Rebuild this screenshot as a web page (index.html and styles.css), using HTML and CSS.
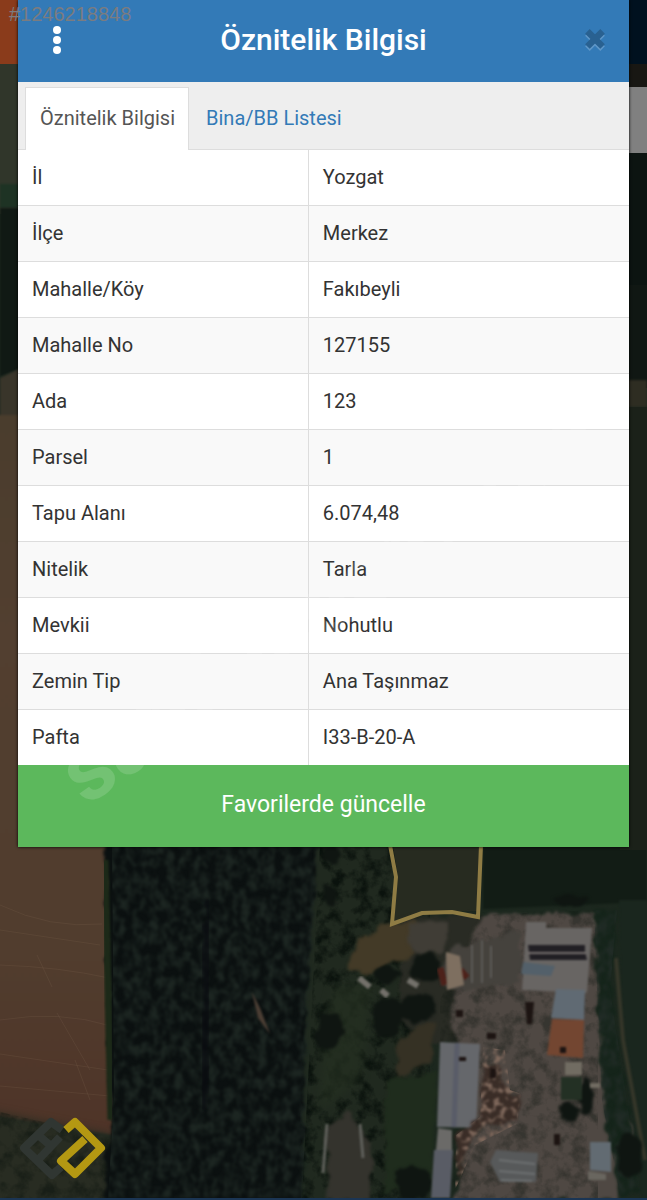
FILE: index.html
```html
<!DOCTYPE html>
<html lang="tr">
<head>
<meta charset="utf-8">
<meta name="viewport" content="width=device-width, initial-scale=1">
<title>Öznitelik Bilgisi</title>
<link rel="stylesheet" href="styles.css">
</head>
<body class="page">
<svg class="map" viewBox="0 0 647 1200" preserveAspectRatio="xMidYMin slice" aria-hidden="true">
  <defs>
    <filter id="soft"><feGaussianBlur stdDeviation="1"/></filter>
    <filter id="blur" x="-20%" y="-20%" width="140%" height="140%"><feGaussianBlur stdDeviation="5"/></filter>
    <filter id="trees" x="0" y="0" width="100%" height="100%">
      <feTurbulence type="fractalNoise" baseFrequency=".12 .09" numOctaves="3" seed="6"/>
      <feColorMatrix values="0 0 0 0 .13  0 0 0 0 .17  0 0 0 0 .15  2.6 0 0 0 -.95"/>
      <feGaussianBlur stdDeviation=".8"/>
      <feComposite in2="SourceGraphic" operator="in"/>
    </filter>
    <filter id="rough" x="-10%" y="-10%" width="120%" height="120%">
      <feTurbulence type="fractalNoise" baseFrequency=".06" numOctaves="3" seed="3" result="n"/>
      <feDisplacementMap in="SourceGraphic" in2="n" scale="14" xChannelSelector="R" yChannelSelector="G"/>
      <feGaussianBlur stdDeviation="1.4"/>
    </filter>
    <filter id="grain" x="0" y="0" width="100%" height="100%">
      <feTurbulence type="fractalNoise" baseFrequency=".07" numOctaves="4" seed="12"/>
      <feColorMatrix values="0 0 0 0 .04  0 0 0 0 .07  0 0 0 0 .05  0 3 0 0 -1.3"/>
      <feComposite in2="SourceGraphic" operator="in"/>
    </filter>
    <filter id="debris" x="0" y="0" width="100%" height="100%">
      <feTurbulence type="fractalNoise" baseFrequency=".16" numOctaves="3" seed="8"/>
      <feColorMatrix values="0 0 0 0 .5  0 0 0 0 .41  0 0 0 0 .36  5 0 0 0 -2.5"/>
      <feGaussianBlur stdDeviation=".8"/>
      <feComposite in2="SourceGraphic" operator="in"/>
    </filter>
    <linearGradient id="soil" x1="0" y1="0" x2="0" y2="1">
      <stop offset="0" stop-color="#4a3d2d"/><stop offset=".3" stop-color="#523f30"/><stop offset=".75" stop-color="#513d2e"/><stop offset="1" stop-color="#4f3428"/>
    </linearGradient>
  </defs>
  <rect width="647" height="1200" fill="#1c271e"/>
  <rect width="30" height="150" y="64" fill="#30362a"/>
  <path d="M0 184H30V208H0z" fill="#1e3324" filter="url(#soft)"/>
  <path d="M0 208H30V365L0 376z" fill="#101914" filter="url(#soft)"/>
  <path d="M0 378L30 364V430H0z" fill="#39352a" filter="url(#soft)"/>
  <path d="M-10 415H102L112 1135L-10 1115z" fill="url(#soil)" filter="url(#soft)"/>
  <g fill="none" stroke="#78604a" stroke-opacity=".25">
    <path d="M0 905Q50 929 102 924M0 965Q60 967 109 978M0 1020Q60 1010 111 1026M0 1054L108 1070M37 955L52 987M57 1013L90 1070M75 1060L90 1100M0 930L100 945M0 1086L110 1096"/>
  </g>
  <path d="M-20 1110L112 1135V1220H-20z" fill="#282c22" filter="url(#blur)"/>
  <path d="M0 1112L112 1138V1200H0z" filter="url(#grain)" opacity=".5"/>
  <path d="M105 835H322L308 985L300 1210H104L112 1110z" fill="#0b1010" filter="url(#rough)"/>
  <path d="M112 840H320L302 1198H108L114 1100z" filter="url(#trees)" opacity=".8"/>
  <path d="M105 860L111 1120" stroke="#1c2918" stroke-width="7" filter="url(#soft)"/>
  <path d="M208 900L203 1110" stroke="#090b10" stroke-width="8" opacity=".7" filter="url(#rough)"/>
  <path d="M252 992L260 1008L270 1034L258 1018z" fill="#4b3e34" filter="url(#soft)"/>
  <path d="M318 840H430V1200H302L309 990z" fill="#20291f" filter="url(#rough)"/>
  <path d="M320 845H430V1198H302z" filter="url(#grain)"/>
  <path d="M335 985H372L360 1080L320 1110L325 1020z" fill="#253021" opacity=".7" filter="url(#blur)"/>
  <path d="M385 1075H437L432 1190H385z" fill="#1f2c1d" filter="url(#rough)"/>
  <path d="M329 1120L350 1112L371 1145V1200H326z" fill="#34332d" filter="url(#rough)"/>
  <path d="M327 1124L323 1173M360 1124L363 1158" stroke="#5f605b" stroke-width="3" filter="url(#soft)"/>
  <path d="M393 846H479V911L422 912L394 922L398 877z" fill="#272b20"/>
  <path d="M483 840H647V902L483 909z" fill="#121c15" filter="url(#soft)"/>
  <path d="M400 918L482 914L475 1045H435L400 1020z" fill="#292b24" filter="url(#rough)"/>
  <path d="M345 970Q360 925 393 925L418 919L412 955L370 972z" fill="#433a27" filter="url(#rough)"/>
  <path d="M408 923L450 920L443 950L412 955z" fill="#403d36" filter="url(#rough)"/>
  <path d="M393 1050Q406 1023 435 1027L432 1060L398 1075z" fill="#353124" filter="url(#rough)"/>
  <path d="M485 914L600 914L600 1010L610 1100L636 1130L618 1200H455L470 1100L450 1010L463 950z" fill="#4f4843" filter="url(#rough)"/>
  <path d="M480 915L598 910V1198H440V1000z" filter="url(#grain)" opacity=".35"/>
  <path d="M594 910H617L610 990L641 1195H620L602 1100z" fill="#15241a" filter="url(#rough)"/>
  <path d="M594 910H617L610 990L641 1195H620L602 1100z" filter="url(#trees)"/>
  <path d="M619 900H647V1198H642L622 1040z" fill="#1a261e" filter="url(#soft)"/>
  <path d="M616 958L623 1040L645 1160" stroke="#353629" stroke-width="4" fill="none" filter="url(#soft)"/>
  <g fill="#0f1511" filter="url(#rough)">
    <ellipse cx="418" cy="1007" rx="18" ry="16"/><ellipse cx="388" cy="1018" rx="16" ry="20"/><ellipse cx="425" cy="967" rx="15" ry="14"/><ellipse cx="386" cy="975" rx="14" ry="9"/>
    <ellipse cx="329" cy="1030" rx="13" ry="18"/><ellipse cx="569" cy="1111" rx="11" ry="10"/><ellipse cx="586" cy="1098" rx="7" ry="17"/><ellipse cx="413" cy="1183" rx="18" ry="16"/><ellipse cx="630" cy="1154" rx="14" ry="20"/><ellipse cx="330" cy="897" rx="7" ry="9"/><ellipse cx="333" cy="855" rx="7" ry="9"/><ellipse cx="570" cy="900" rx="18" ry="5"/>
  </g>
  <path d="M445 952L466 947L520 930V982L462 992L440 985z" fill="#45423d" filter="url(#rough)"/>
  <path d="M440 968L445 985M460 970L467 978" stroke="#4d211a" stroke-width="7" filter="url(#soft)"/>
  <path d="M446 952L460 956L464 985L447 990z" fill="#7e6f60" filter="url(#soft)"/>
  <path d="M472 945V983M482 940V983M491 946V978" stroke="#5c5b58" stroke-width="2" filter="url(#soft)"/>
  <path d="M359 978L370 987M381 990L388 996M408 980L418 986" stroke="#74716b" stroke-width="6" filter="url(#soft)"/>
  <g filter="url(#soft)">
    <path d="M526 922H546V928H592L587 993L522 990z" fill="#686563"/>
    <path d="M523 962L555 966L551 976L521 974z" fill="#53606a"/>
    <path d="M528 945H585V951L587 960H530z" fill="#211f24"/>
    <path d="M528 953H586" stroke="#77716f" stroke-width="2"/>
    <path d="M556 989L585 990L584 1020L551 1018z" fill="#606a73"/>
    <path d="M552 1019L584 1020L583 1058L547 1055z" fill="#734631"/>
    <path d="M440 1042L480 1044L476 1128L437 1127z" fill="#65676b"/>
    <path d="M457 1043L454 1127" stroke="#595c68" stroke-width="5"/>
    <path d="M438 1128L452 1130V1150H436z" fill="#6b6a68"/>
    <path d="M434 1150H453L450 1198H431z" fill="#595c65"/>
    <path d="M496 1150L538 1153L536 1182H500L490 1162z" fill="#57595a"/>
    <path d="M499 1160L535 1164M499 1171L535 1174M501 1180L532 1181" stroke="#6d7071" stroke-width="2"/>
    <path d="M590 1142H611V1172L590 1170z" fill="#626b72"/>
    <path d="M588 1171L606 1174V1180H588z" fill="#69665f"/>
    <path d="M565 1062H582V1075H565zM590 1083H600V1088H590z" fill="#716c62"/>
    <path d="M561 1077H582V1100H561z" fill="#233024"/>
  </g>
  <path d="M483 1065L499 1065L505 1090L521 1094L517 1119L475 1130L455 1180L456 1135L480 1117z" fill="#3a2d27" filter="url(#rough)"/>
  <path d="M483 1047L505 1050L510 1090L521 1094L517 1124L475 1145L455 1190L456 1135L480 1117z" filter="url(#debris)"/>
  <g fill="#1c1412" filter="url(#soft)"><path d="M525 1002H534L532 1024H527zM487 1033H496V1039H487zM459 1057H466V1061H459zM554 1134H560V1145H554zM560 1047H566V1053H560zM490 1068H496V1078H490zM456 1010H463V1017H456z"/></g>
  <path d="M390 845L396 877L392 924L422 913L452 912L478 917L481 845" fill="none" stroke="#8f7c44" stroke-width="4"/>
  <rect width="40" height="64" fill="#8a3b1b"/>
  <rect x="620" width="27" height="64" fill="#00111f"/>
  <rect x="620" y="64" width="27" height="23" fill="#181713"/>
  <rect x="620" y="87" width="27" height="66" fill="#808080"/>
  <rect x="620" y="153" width="27" height="235" fill="#0c1411"/>
  <path d="M620 285H647V380H620z" fill="#101713"/><path d="M620 380H647V407H620z" fill="#2e2d22" filter="url(#soft)"/>
  <path d="M620 407H647V850H620z" fill="#1b2119"/>
  <rect y="1198" width="647" height="2" fill="#1b3554"/>
  <g fill="none" stroke-width="8" stroke-linejoin="round">
    <path d="M62 1130L51 1122L24 1148L52 1175L61 1167M38 1135L51 1146M38 1160L60 1137" stroke="#303632"/>
    <path d="M66 1130L75 1122L101 1148L75 1174L61 1161L85 1139" stroke="#b49812"/>
  </g>
</svg>

<main class="dialog">
  <header class="dialog-header">
    <button class="icon-button" type="button" aria-label="Menü">
      <svg class="menu-icon" viewBox="0 0 10 30" aria-hidden="true"><circle cx="5" cy="5" r="4"/><circle cx="5" cy="15" r="4"/><circle cx="5" cy="25" r="4"/></svg>
    </button>
    <h1 class="dialog-title">Öznitelik Bilgisi</h1>
    <button class="icon-button" type="button" aria-label="Kapat">
      <svg class="close-icon" viewBox="0 0 22 24" aria-hidden="true"><path class="close-shadow" d="M4 6L18 20M18 6L4 20"/><path class="close-cross" d="M4 4L18 18M18 4L4 18"/></svg>
    </button>
  </header>
  <nav class="tabs" role="tablist">
    <button class="tab tab-active" type="button" role="tab" aria-selected="true">Öznitelik Bilgisi</button>
    <button class="tab" type="button" role="tab" aria-selected="false">Bina/BB Listesi</button>
  </nav>
  <table class="attributes">
    <tbody>
      <tr><th scope="row">İl</th><td>Yozgat</td></tr>
      <tr><th scope="row">İlçe</th><td>Merkez</td></tr>
      <tr><th scope="row">Mahalle/Köy</th><td>Fakıbeyli</td></tr>
      <tr><th scope="row">Mahalle No</th><td>127155</td></tr>
      <tr><th scope="row">Ada</th><td>123</td></tr>
      <tr><th scope="row">Parsel</th><td>1</td></tr>
      <tr><th scope="row">Tapu Alanı</th><td>6.074,48</td></tr>
      <tr><th scope="row">Nitelik</th><td>Tarla</td></tr>
      <tr><th scope="row">Mevkii</th><td>Nohutlu</td></tr>
      <tr><th scope="row">Zemin Tip</th><td>Ana Taşınmaz</td></tr>
      <tr><th scope="row">Pafta</th><td>I33-B-20-A</td></tr>
    </tbody>
  </table>
  <button class="favorite" type="button">Favorilerde güncelle</button>
</main>
<span class="listing-number">#1246218848</span>
<svg class="watermark" viewBox="0 0 647 1200" preserveAspectRatio="xMidYMin slice" aria-hidden="true">
  <text x="86" y="807" transform="rotate(-35 86 807)">sahibinden.com</text>
</svg>
</body>
</html>
```

FILE: styles.css
```css
* { box-sizing: border-box; }

.page {
  position: relative;
  min-height: 100vh;
  margin: 0;
  padding: 0 18px;
  overflow: hidden;
  background: #1c271e;
  color: #333;
  font-family: Roboto, "Liberation Sans", sans-serif;
  font-size: 20px;
  line-height: 28px;
}

.map,
.watermark {
  position: absolute;
  top: 0;
  left: 0;
  width: 100%;
  height: 100%;
}

.map filter { color-interpolation-filters: sRGB; }

.watermark {
  fill: #fff;
  fill-opacity: .14;
  font-size: 88px;
  font-weight: 700;
  pointer-events: none;
}

button {
  border: 0;
  padding: 0;
  background: none;
  color: inherit;
  font: inherit;
  cursor: pointer;
}

.dialog {
  position: relative;
  background: #fff;
  box-shadow: 0 0 3px #000;
}

.dialog-header {
  display: flex;
  align-items: center;
  justify-content: space-between;
  padding: 20px 16px 22px;
  background: #337ab7;
  color: #fff;
}

.dialog-title {
  margin: 0;
  font-size: 30px;
  font-weight: 500;
  line-height: 40px;
}

.icon-button {
  display: grid;
  place-items: center;
  width: 36px;
  height: 40px;
}

.icon-button:first-child {
  width: 46px;
}

.icon-button:last-child {
  width: 46px;
  justify-items: end;
  padding-right: 6px;
}

.menu-icon { width: 10px; height: 30px; fill: #fff; }
.close-icon { width: 24px; height: 26px; fill: none; stroke-width: 6; }
.close-shadow { stroke: #5f97c8; }
.close-cross { stroke: #296191; }

.tabs {
  display: flex;
  padding: 5px 7px 0;
  border-bottom: 1px solid #ddd;
  background: #eee;
}

.tab {
  margin-bottom: -1px;
  padding: 16px;
  padding-bottom: 18px;
  border: 1px solid transparent;
  border-bottom: 0;
  color: #337ab7;
}

.tab-active {
  padding-right: 13px;
  padding-left: 14px;
  border-color: #ddd;
  background: #fff;
  color: #555;
}

.attributes {
  width: 100%;
  border-collapse: separate;
  border-spacing: 0;
  table-layout: fixed;
}

.attributes tr:nth-child(even) { background: #f9f9f9; }

.attributes th,
.attributes td {
  padding: 13px 14px 14px;
  border-bottom: 1px solid #ddd;
  font-weight: 400;
  text-align: left;
}

.attributes th {
  width: 47.6%;
  border-right: 1px solid #ddd;
}

.attributes tr:last-child > * { border-bottom: 0; }

.favorite {
  display: block;
  width: 100%;
  padding: 24px 16px 26px;
  background: #5cb85c;
  color: #fff;
  font-size: 23px;
  line-height: 32px;
}

.listing-number {
  position: absolute;
  top: 0;
  left: 9px;
  color: #7b7c80;
  font-family: "Liberation Sans", Arial, sans-serif;
}
```
